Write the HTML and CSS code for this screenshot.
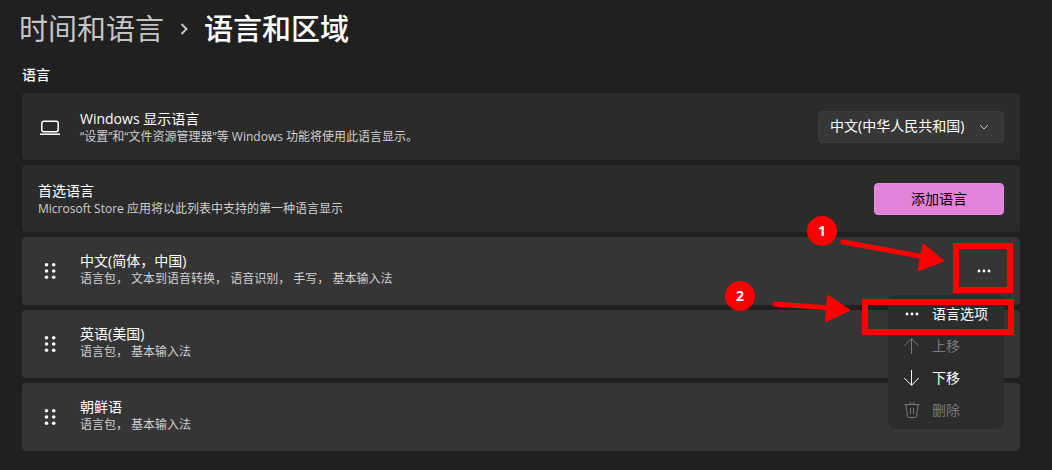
FILE: index.html
```html
<!DOCTYPE html>
<html lang="zh-CN">

<head>
  <meta charset="UTF-8">
  <meta name="viewport" content="width=device-width, initial-scale=1.0">
  <title>语言和区域</title>
  <link rel="stylesheet" href="styles.css">
</head>

<body>
  <main class="page">
    <nav class="breadcrumb">
      <a class="breadcrumb-link" href="#">时间和语言</a>
      <svg class="breadcrumb-arrow" viewBox="0 0 10 14" width="10" height="14">
        <path d="M2.5 2 L7.5 7 L2.5 12" />
      </svg>
      <h1>语言和区域</h1>
    </nav>

    <h2 class="section-title">语言</h2>

    <div class="card-list">
      <!-- 显示语言 -->
      <section class="card">
        <svg class="card-icon" viewBox="0 0 24 24" width="24" height="24">
          <rect x="3.8" y="6.300" width="16.4" height="10.4" rx="2" />
          <path d="M2 19.200 H22" />
        </svg>
        <div class="card-text">
          <label class="card-title" for="displayLanguage">Windows 显示语言</label>
          <p class="card-desc">“设置”和“文件资源管理器”等 Windows 功能将使用此语言显示。</p>
        </div>
        <div class="select-box">
          <select class="select" id="displayLanguage">
            <option>中文(中华人民共和国)</option>
          </select>
          <svg class="select-arrow" viewBox="0 0 10 10" width="10" height="10">
            <path d="M1 3 L5 7 L9 3" />
          </svg>
        </div>
      </section>

      <!-- 首选语言 -->
      <section class="card">
        <div class="card-text">
          <h3 class="card-title">首选语言</h3>
          <p class="card-desc">Microsoft Store 应用将以此列表中支持的第一种语言显示</p>
        </div>
        <button class="add-btn" type="button">添加语言</button>
      </section>

      <section class="card language open">
        <svg class="card-icon grip" viewBox="0 0 24 24" width="24" height="24">
          <circle cx="8.5" cy="5.7" r="1.8" /><circle cx="15.7" cy="5.7" r="1.8" />
          <circle cx="8.5" cy="12" r="1.8" /><circle cx="15.7" cy="12" r="1.8" />
          <circle cx="8.5" cy="18.3" r="1.8" /><circle cx="15.7" cy="18.3" r="1.8" />
        </svg>
        <div class="card-text">
          <h3 class="card-title">中文(简体，中国)</h3>
          <p class="card-desc">语言包， 文本到语音转换， 语音识别， 手写， 基本输入法</p>
        </div>
        <button class="more-btn" type="button" aria-label="更多选项">
          <svg class="dots" viewBox="0 0 16 16" width="16" height="16">
            <circle cx="3" cy="8" r="1.4" /><circle cx="8" cy="8" r="1.4" /><circle cx="13" cy="8" r="1.4" />
          </svg>
        </button>

        <!-- 更多选项菜单 -->
        <div class="menu">
          <button class="menu-item" type="button">
            <svg class="dots" viewBox="0 0 16 16" width="16" height="16">
              <circle cx="3" cy="8" r="1.4" /><circle cx="8" cy="8" r="1.4" /><circle cx="13" cy="8" r="1.4" />
            </svg>
            <span>语言选项</span>
          </button>
          <button class="menu-item" type="button" disabled>
            <svg viewBox="0 0 16 16" width="16" height="16">
              <path d="M7.5 16 V0.7 M0.3 8 L7.5 0.7 L14.7 8" />
            </svg>
            <span>上移</span>
          </button>
          <button class="menu-item" type="button">
            <svg viewBox="0 0 16 16" width="16" height="16">
              <path d="M7.5 0 V15.3 M0.3 8 L7.5 15.3 L14.7 8" />
            </svg>
            <span>下移</span>
          </button>
          <button class="menu-item" type="button" disabled>
            <svg viewBox="0 0 16 16" width="16" height="16">
              <path d="M0.5 2.5 H15.5 M5.8 2.5 C5.8 -0.2 10.2 -0.2 10.2 2.5 M2 2.5 L3.3 13.8 Q3.5 15.5 5 15.5 H11 Q12.5 15.5 12.7 13.8 L14 2.5 M6.5 6 V12 M9.5 6 V12" />
            </svg>
            <span>删除</span>
          </button>
        </div>

        <!-- 操作步骤标注 -->
        <svg class="marks" viewBox="0 0 300 130" width="300" height="130">
          <rect class="mark-box" x="236" y="36" width="54" height="44" />
          <rect class="mark-box" x="145" y="92" width="146" height="30" />
          <path class="mark-line" d="M123 32 L205 47" />
          <path class="mark-head" d="M203.500 34.500 L198.500 60 L223 51 Z" />
          <path class="mark-line" d="M55 94 L110 98" />
          <path class="mark-head" d="M108 86 L106 111 L129 100 Z" />
          <circle class="mark-dot" cx="102" cy="21" r="15" />
          <text class="mark-text" x="102" y="26">1</text>
          <circle class="mark-dot" cx="20" cy="86" r="15" />
          <text class="mark-text" x="20" y="91">2</text>
        </svg>
      </section>

      <section class="card language">
        <svg class="card-icon grip" viewBox="0 0 24 24" width="24" height="24">
          <circle cx="8.5" cy="5.7" r="1.8" /><circle cx="15.7" cy="5.7" r="1.8" />
          <circle cx="8.5" cy="12" r="1.8" /><circle cx="15.7" cy="12" r="1.8" />
          <circle cx="8.5" cy="18.3" r="1.8" /><circle cx="15.7" cy="18.3" r="1.8" />
        </svg>
        <div class="card-text">
          <h3 class="card-title">英语(美国)</h3>
          <p class="card-desc">语言包， 基本输入法</p>
        </div>
      </section>

      <section class="card language">
        <svg class="card-icon grip" viewBox="0 0 24 24" width="24" height="24">
          <circle cx="8.5" cy="5.7" r="1.8" /><circle cx="15.7" cy="5.7" r="1.8" />
          <circle cx="8.5" cy="12" r="1.8" /><circle cx="15.7" cy="12" r="1.8" />
          <circle cx="8.5" cy="18.3" r="1.8" /><circle cx="15.7" cy="18.3" r="1.8" />
        </svg>
        <div class="card-text">
          <h3 class="card-title">朝鲜语</h3>
          <p class="card-desc">语言包， 基本输入法</p>
        </div>
      </section>
    </div>
  </main>
</body>

</html>
```

FILE: styles.css
```css
* {
  margin: 0;
  padding: 0;
  box-sizing: border-box;
  font-family: "Segoe UI", "Open Sans", "Noto Sans CJK SC", sans-serif;
}

body {
  background-color: #202020;
  color: #fff;
  font-size: 14px;
  line-height: 20px;
}

svg {
  flex-shrink: 0;
  fill: none;
  stroke: currentColor;
}

.page {
  padding: 9px 32px 16px 22px;
}

.breadcrumb {
  display: flex;
  align-items: center;
  gap: 15px;
  margin-left: -3px;
  font-size: 29px;
  line-height: 40px;
}

.breadcrumb-link {
  color: #c5c5c5;
  text-decoration: none;
}

.breadcrumb-arrow {
  color: #c5c5c5;
  stroke-width: 2;
}

.breadcrumb h1 {
  font-size: 29px;
  font-weight: 500;
}

.section-title {
  margin: 16px 0 8px;
  font-size: 14px;
  font-weight: 500;
}

.card-list {
  display: flex;
  flex-direction: column;
  gap: 5px;
}

.card {
  display: flex;
  align-items: center;
  gap: 18px;
  min-height: 67px;
  padding: 0 16px;
  background-color: #2b2b2b;
  border-radius: 4px;
}

.card.language {
  min-height: 68px;
  background-color: #353535;
}

.card.open {
  position: relative;
}

.card-icon {
  stroke-width: 1.5;
}

.grip,
.dots {
  fill: currentColor;
  stroke: none;
}

.card-text {
  flex: 1;
}

.language .card-text {
  padding-bottom: 4px;
}

.card-title {
  display: block;
  font-size: 14px;
  font-weight: 400;
  line-height: 20px;
}

.card-desc {
  color: #cfcfcf;
  font-size: 12px;
  line-height: 16px;
}

.select-box {
  display: grid;
  align-items: center;
}

.select,
.select-arrow {
  grid-area: 1 / 1;
}

.select {
  height: 32px;
  padding: 0 38px 2px 11px;
  appearance: none;
  background-color: #373737;
  border: 1px solid #3c3c3c;
  border-radius: 4px;
  color: #fff;
  font-size: 14px;
}

.select-arrow {
  justify-self: end;
  margin-right: 15px;
  color: #c5c5c5;
  pointer-events: none;
}

.add-btn {
  width: 130px;
  height: 32px;
  padding-bottom: 2px;
  background-color: #e283d9;
  border: 1px solid #e58fdd;
  border-radius: 4px;
  color: #000;
  font-size: 14px;
}

.more-btn {
  display: flex;
  align-items: center;
  justify-content: center;
  width: 40px;
  height: 32px;
  background: none;
  border: none;
  color: #fff;
}

.menu {
  position: absolute;
  top: 58px;
  right: 16px;
  z-index: 1;
  width: 116px;
  padding: 3px 0;
  background-color: #2c2c2c;
  border-radius: 8px;
}

.menu-item {
  display: flex;
  align-items: center;
  gap: 12px;
  width: 100%;
  height: 32px;
  padding: 0 16px;
  background: none;
  border: none;
  color: #fff;
  font-size: 14px;
}

.menu-item span {
  padding-bottom: 2px;
}

.menu-item:disabled {
  color: #787878;
}

/* 红色标注 */
.marks {
  position: absolute;
  top: -27px;
  right: 0;
  z-index: 2;
  color: #f00;
  pointer-events: none;
}

.mark-box {
  stroke-width: 6;
}

.mark-line {
  stroke-width: 5;
  stroke-linecap: round;
}

.mark-head {
  fill: currentColor;
  stroke-width: 2;
  stroke-linejoin: round;
}

.mark-dot {
  fill: currentColor;
  stroke: none;
}

.mark-text {
  fill: #fff;
  stroke: none;
  font-size: 14px;
  font-weight: 700;
  text-anchor: middle;
}
```
